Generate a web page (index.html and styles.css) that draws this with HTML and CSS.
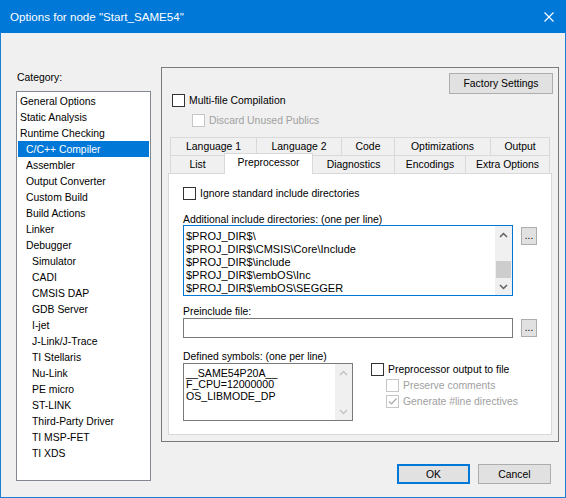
FILE: index.html
```html
<!DOCTYPE html>
<html>
<head>
  <meta charset="utf-8">
  <link rel="stylesheet" href="styles.css">
</head>
<body>
<div class="window">
  <div class="titlebar">
    <span class="title">Options for node "Start_SAME54"</span>
    <svg class="close" width="10" height="10" viewBox="0 0 10 10"><path d="M0.5 0.5L9.5 9.5M9.5 0.5L0.5 9.5" stroke="#fff" stroke-width="1.1" fill="none"/></svg>
  </div>

  <div class="client">
    <div class="category">
      <div class="cat-label">Category:</div>
      <div class="cat-list">
        <div class="item">General Options</div>
        <div class="item">Static Analysis</div>
        <div class="item">Runtime Checking</div>
        <div class="item l1 selected">C/C++ Compiler</div>
        <div class="item l1">Assembler</div>
        <div class="item l1">Output Converter</div>
        <div class="item l1">Custom Build</div>
        <div class="item l1">Build Actions</div>
        <div class="item l1">Linker</div>
        <div class="item l1">Debugger</div>
        <div class="item l2">Simulator</div>
        <div class="item l2">CADI</div>
        <div class="item l2">CMSIS DAP</div>
        <div class="item l2">GDB Server</div>
        <div class="item l2">I-jet</div>
        <div class="item l2">J-Link/J-Trace</div>
        <div class="item l2">TI Stellaris</div>
        <div class="item l2">Nu-Link</div>
        <div class="item l2">PE micro</div>
        <div class="item l2">ST-LINK</div>
        <div class="item l2">Third-Party Driver</div>
        <div class="item l2">TI MSP-FET</div>
        <div class="item l2">TI XDS</div>
      </div>
    </div>

    <div class="options">
      <div class="group">
        <div class="factory-row"><div class="button factory">Factory Settings</div></div>
        <div class="check-row multi"><span class="check"></span><span>Multi-file Compilation</span></div>
        <div class="check-row discard disabled"><span class="check"></span><span>Discard Unused Publics</span></div>

        <div class="tabs">
          <div class="tab-row">
            <div class="tab" style="width:86px">Language 1</div>
            <div class="tab" style="width:85px">Language 2</div>
            <div class="tab" style="width:53px">Code</div>
            <div class="tab" style="width:96px">Optimizations</div>
            <div class="tab last" style="width:60px">Output</div>
          </div>
          <div class="tab-row">
            <div class="tab" style="width:54px">List</div>
            <div class="tab active" style="width:89px">Preprocessor</div>
            <div class="tab after-active" style="width:81px">Diagnostics</div>
            <div class="tab" style="width:71px">Encodings</div>
            <div class="tab last" style="width:85px">Extra Options</div>
          </div>
        </div>

        <div class="page">
          <div class="check-row ignore"><span class="check"></span><span>Ignore standard include directories</span></div>

          <div class="field-label first">Additional include directories: (one per line)</div>
          <div class="field-row">
            <div class="textbox multi-line focused">
              <div class="lines">
                <div>$PROJ_DIR$\</div>
                <div>$PROJ_DIR$\CMSIS\Core\Include</div>
                <div>$PROJ_DIR$\include</div>
                <div>$PROJ_DIR$\embOS\Inc</div>
                <div>$PROJ_DIR$\embOS\SEGGER</div>
              </div>
              <div class="scrollbar">
                <div class="arrow"><svg width="9" height="6" viewBox="0 0 9 6"><path d="M1 5L4.5 1.5L8 5" stroke="#606060" stroke-width="1.5" fill="none"/></svg></div>
                <div class="track"><div class="thumb"></div></div>
                <div class="arrow"><svg width="9" height="6" viewBox="0 0 9 6"><path d="M1 1L4.5 4.5L8 1" stroke="#606060" stroke-width="1.5" fill="none"/></svg></div>
              </div>
            </div>
            <div class="button browse">...</div>
          </div>

          <div class="field-label pre">Preinclude file:</div>
          <div class="field-row">
            <div class="textbox single"></div>
            <div class="button browse">...</div>
          </div>

          <div class="field-label defs">Defined symbols: (one per line)</div>
          <div class="field-row">
            <div class="textbox symbols">
              <div class="lines">
                <div>__SAME54P20A__</div>
                <div>F_CPU=12000000</div>
                <div>OS_LIBMODE_DP</div>
              </div>
              <div class="scrollbar off">
                <div class="arrow"><svg width="9" height="6" viewBox="0 0 9 6"><path d="M1 5L4.5 1.5L8 5" stroke="#c4c4c4" stroke-width="1.5" fill="none"/></svg></div>
                <div class="track"></div>
                <div class="arrow"><svg width="9" height="6" viewBox="0 0 9 6"><path d="M1 1L4.5 4.5L8 1" stroke="#c4c4c4" stroke-width="1.5" fill="none"/></svg></div>
              </div>
            </div>
            <div class="pp-output">
              <div class="check-row"><span class="check"></span><span>Preprocessor output to file</span></div>
              <div class="check-row sub disabled"><span class="check"></span><span>Preserve comments</span></div>
              <div class="check-row sub disabled"><span class="check"><svg width="11" height="11" viewBox="0 0 11 11"><path d="M2 5.5L4.5 8L9.5 2.5" stroke="#a8a8a8" stroke-width="1.2" fill="none"/></svg></span><span>Generate #line directives</span></div>
            </div>
          </div>
        </div>
      </div>

      <div class="dialog-buttons">
        <div class="button ok">OK</div>
        <div class="button">Cancel</div>
      </div>
    </div>
  </div>
</div>
</body>
</html>
```

FILE: styles.css
```css
* {box-sizing: border-box;}
html, body {margin: 0;}
body {
  width: 566px;
  height: 498px;
  overflow: hidden;
  font-family: "Liberation Sans", Arial, sans-serif;
  font-size: 10.4px;
  color: #000;
  background: #f0f0f0;
}

.window {
  width: 566px;
  height: 498px;
  border: 1px solid #1c7fd4;
  border-top: none;
  display: flex;
  flex-direction: column;
}
.titlebar {
  height: 33px;
  flex: none;
  margin: 0 -1px;
  padding-left: 10px;
  background: #0078d7;
  color: #fff;
  display: flex;
  align-items: center;
}
.title {flex: 1; font-size: 11.6px;}
.close {margin-right: 12px;}

.client {display: flex; padding-left: 15px;}

/* category list on the left */
.category {width: 135px; padding-top: 37px;}
.cat-label {line-height: 13px; padding: 1px 0 0 1px; margin-bottom: 7px;}
.cat-list {height: 390px; border: 1px solid #828790; background: #fff; padding: 1px;}
.item {height: 16px; line-height: 16px; padding: 1px 0 0 2px; white-space: nowrap;}
.item.l1 {padding-left: 8px;}
.item.l2 {padding-left: 14px;}
.item.selected {background: #0078d7; color: #fff;}

/* options group */
.options {width: 398px; margin-left: 10px; padding-top: 34px;}
.group {height: 375px; border: 1px solid #7a7a7a;}

.button {
  height: 20px;
  width: 73px;
  background: #e1e1e1;
  border: 1px solid #adadad;
  display: flex;
  align-items: center;
  justify-content: center;
}
.factory-row {display: flex; justify-content: flex-end; padding: 5px 5px 0 0;}
.button.factory {width: 104px; height: 21px;}

.check-row {display: flex; align-items: center; height: 13px; gap: 4px; white-space: nowrap;}
.check {
  width: 13px;
  height: 13px;
  border: 1px solid #333;
  background: #fff;
  display: flex;
  align-items: center;
  justify-content: center;
  flex: none;
}
.check-row.disabled {color: #a0a0a0;}
.check-row.disabled .check {border-color: #c6c6c6;}
.check-row.multi {padding-left: 10px;}
.check-row.discard {padding-left: 30px; margin-top: 7px;}

/* tab strip */
.tabs {margin: 10px 8px 0;}
.tab-row {display: flex; height: 18px; align-items: flex-start;}
.tab {
  height: 18px;
  line-height: 18px;
  text-align: center;
  white-space: nowrap;
  border-top: 1px solid #d9d9d9;
  border-left: 1px solid #d9d9d9;
  background: #f0f0f0;
}
.tab.last {border-right: 1px solid #d9d9d9;}
.tab.after-active {border-left: none;}
.tab.active {
  position: relative;
  z-index: 1;
  height: 21px;
  margin-top: -2px;
  line-height: 17px;
  background: #fff;
  border-right: 1px solid #d9d9d9;
}

.page {
  height: 262px;
  margin: 0 6px;
  border: 1px solid #d9d9d9;
  background: #fff;
  padding-left: 14px;
}
.check-row.ignore {margin-top: 13px;}

.field-label {line-height: 13px; padding-top: 1px; height: 13px; white-space: nowrap;}
.field-label.first {margin-top: 12px;}
.field-label.pre {margin-top: 8px;}
.field-label.defs {margin-top: 11px;}
.field-row {display: flex; align-items: flex-start; margin-top: 1px;}

.textbox {
  width: 330px;
  border: 1px solid #7a7a7a;
  background: #fff;
  display: flex;
  font-size: 11px;
}
.textbox.focused {border-color: #0078d7;}
.textbox.multi-line {height: 71px; margin-top: -1px;}
.textbox.single {height: 20px;}
.textbox.symbols {width: 170px; height: 58px; font-size: 10.6px;}
.lines {flex: 1; padding: 3.5px 0 0 2px; line-height: 13px; white-space: nowrap; overflow: hidden;}
.symbols .lines {padding-top: 4px; line-height: 11.4px;}

.button.browse {width: 16px; height: 18px; margin: 1px 0 0 8px; align-items: flex-end; padding-bottom: 3px; font-size: 10px;}

.scrollbar {width: 17px; background: #f0f0f0; display: flex; flex-direction: column;}
.scrollbar .arrow {height: 17px; display: flex; align-items: center; justify-content: center;}
.scrollbar .track {flex: 1; display: flex; flex-direction: column; justify-content: flex-end;}
.scrollbar .thumb {height: 17px; margin: 0 1px; background: #cdcdcd;}

.pp-output {margin-left: 18px; display: flex; flex-direction: column; gap: 3px;}
.pp-output .sub {padding-left: 15px;}

.dialog-buttons {display: flex; justify-content: flex-end; gap: 8px; margin-top: 22px; padding-right: 8px;}
.button.ok {border: 2px solid #0078d7;}
```
